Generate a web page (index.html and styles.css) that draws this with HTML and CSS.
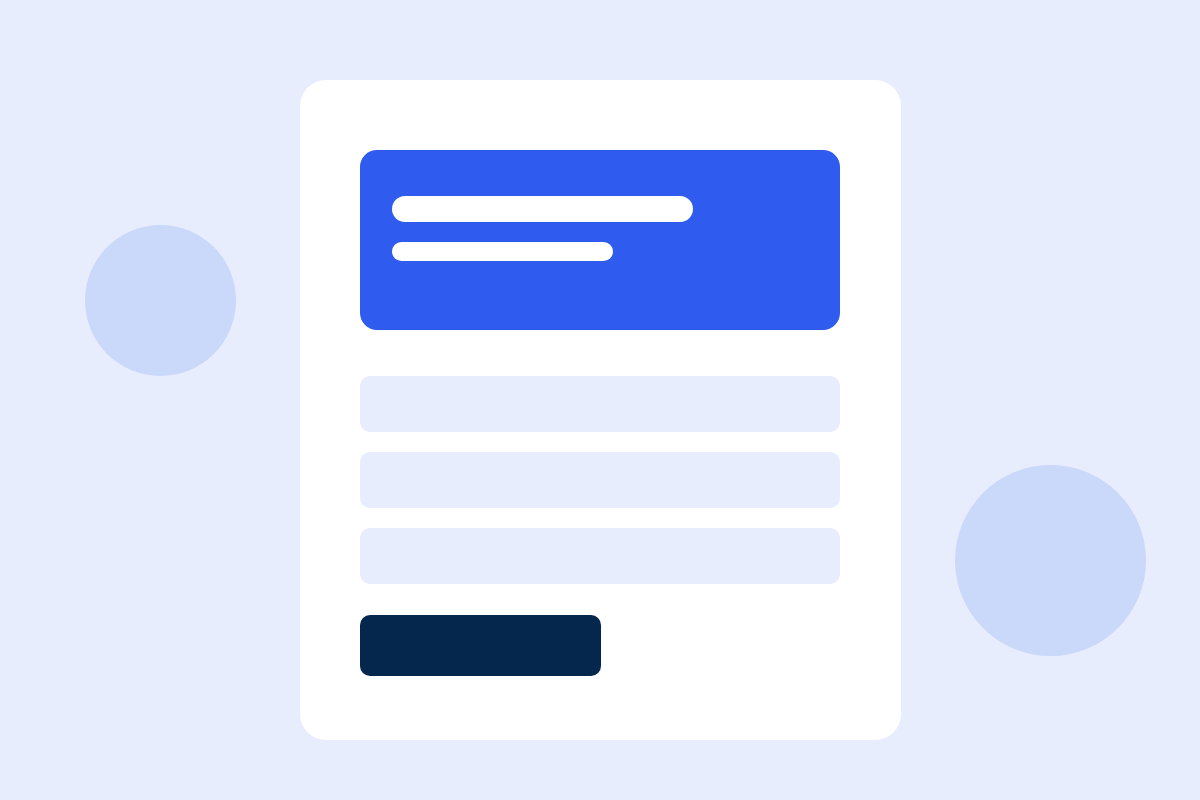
FILE: index.html
```html
<!DOCTYPE html>
<html lang="en">
<head>
<meta charset="utf-8">
<title>Form illustration</title>
<link rel="stylesheet" href="styles.css">
</head>
<body>
<div class="scene">
  <div class="blob blob-left"></div>
  <div class="blob blob-right"></div>
  <div class="card">
    <div class="header">
      <div class="line line-title"></div>
      <div class="line line-sub"></div>
    </div>
    <div class="fields">
      <div class="field"></div>
      <div class="field"></div>
      <div class="field"></div>
    </div>
    <div class="button"></div>
  </div>
</div>
</body>
</html>
```

FILE: styles.css
```css
* { box-sizing: border-box; }
html, body {
  margin: 0;
  padding: 0;
  background: #e8edfd;
  font-family: "Liberation Sans", Arial, sans-serif;
}
.scene {
  position: relative;
  width: 1200px;
  height: 800px;
  overflow: hidden;
  display: flex;
  justify-content: center;
  align-items: flex-start;
  padding-top: 80px;
}
.blob {
  position: absolute;
  border-radius: 50%;
  background: #cad8fa;
}
.blob-left {
  left: 85px;
  top: 225px;
  width: 151px;
  height: 151px;
}
.blob-right {
  left: 955px;
  top: 465px;
  width: 191px;
  height: 191px;
}
.card {
  position: relative;
  width: 601px;
  height: 660px;
  background: #ffffff;
  border-radius: 26px;
  padding: 70px 60px 0 60px;
  display: flex;
  flex-direction: column;
}
.card > * { flex-shrink: 0; }
.header {
  width: 480px;
  height: 180px;
  background: #2f5bef;
  border-radius: 17px;
  padding: 46px 32px 0 32px;
  display: flex;
  flex-direction: column;
  gap: 20px;
}
.line {
  background: #ffffff;
  border-radius: 14px;
}
.line-title {
  width: 301px;
  height: 26px;
}
.line-sub {
  width: 221px;
  height: 19px;
  border-radius: 10px;
}
.fields {
  margin-top: 46px;
  display: flex;
  flex-direction: column;
  gap: 20px;
}
.field {
  width: 480px;
  height: 56px;
  background: #e8edfd;
  border-radius: 10px;
}
.button {
  margin-top: 31px;
  width: 241px;
  height: 61px;
  background: #05264d;
  border-radius: 10px;
}
```
